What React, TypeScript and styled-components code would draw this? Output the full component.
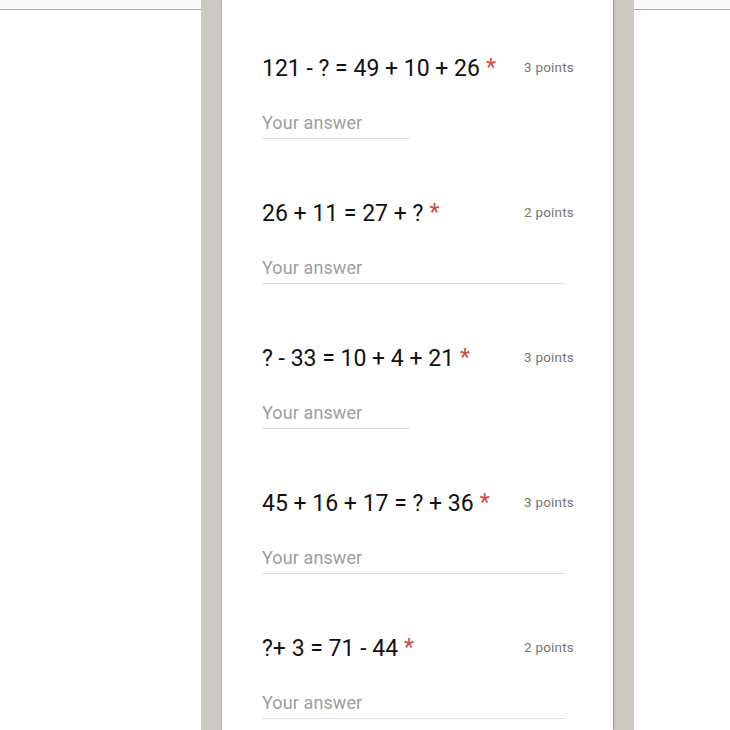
import React from "react";
import styled, { createGlobalStyle } from "styled-components";

const Global = createGlobalStyle`
  html, body { margin: 0; padding: 0; background: #ffffff; }
  body { font-family: Roboto, "Liberation Sans", Arial, sans-serif; }
`;

const Page = styled.div`
  display: flex;
  width: 730px;
  height: 730px;
  overflow: hidden;
  background: #ffffff;
`;

const Side = styled.div<{ $w: number }>`
  width: ${(p) => p.$w}px;
  flex: none;
`;

const TopBar = styled.div`
  height: 9px;
  background: #f8f8f8;
  border-bottom: 1px solid #a9a9a9;
`;

const Column = styled.div`
  width: 433px;
  flex: none;
  background: #ccc9c4;
  padding: 0 21px 0 21px;
  box-sizing: border-box;
  display: flex;
`;

const Card = styled.div`
  flex: 1;
  background: #ffffff;
  box-shadow: 0 0 2px rgba(0, 0, 0, 0.35), 1px 0 1px rgba(0, 0, 0, 0.12);
  padding: 0 39px 0 40px;
`;

const Item = styled.div`
  padding: 54px 0 6px;
`;

const QuestionRow = styled.div`
  display: flex;
  align-items: center;
  justify-content: space-between;
  height: 28px;
`;

const Question = styled.div`
  font-size: 23px;
  color: #111111;
  white-space: nowrap;
`;

const Required = styled.span`
  color: #d2463c;
  margin-left: 6px;
  position: relative;
  top: -1px;
`;

const Points = styled.div`
  font-size: 13.5px;
  color: #757575;
  letter-spacing: 0.2px;
  position: relative;
  top: -1px;
`;

const AnswerField = styled.div<{ $wide: boolean }>`
  margin-top: 29px;
  width: ${(p) => (p.$wide ? 303 : 148)}px;
  height: 24px;
  line-height: 24px;
  padding-bottom: 3px;
  border-bottom: 1px solid #e0e0e0;
  font-size: 18px;
  color: #9e9e9e;
  letter-spacing: 0.1px;
`;

const items = [
  { q: "121 - ? = 49 + 10 + 26", pts: "3 points", wide: false },
  { q: "26 + 11 = 27 + ?", pts: "2 points", wide: true },
  { q: "? - 33 = 10 + 4 + 21", pts: "3 points", wide: false },
  { q: "45 + 16 + 17 = ? + 36", pts: "3 points", wide: true },
  { q: "?+ 3 = 71 - 44", pts: "2 points", wide: true },
];

export default function App() {
  return (
    <>
      <Global />
      <Page>
        <Side $w={201}>
          <TopBar />
        </Side>
        <Column>
          <Card>
            {items.map((it, i) => (
              <Item key={i}>
                <QuestionRow>
                  <Question>
                    {it.q}
                    <Required>*</Required>
                  </Question>
                  <Points>{it.pts}</Points>
                </QuestionRow>
                <AnswerField $wide={it.wide}>Your answer</AnswerField>
              </Item>
            ))}
          </Card>
        </Column>
        <Side $w={96}>
          <TopBar />
        </Side>
      </Page>
    </>
  );
}
